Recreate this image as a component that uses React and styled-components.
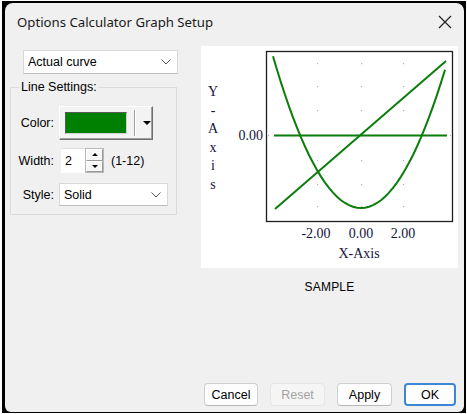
import styled, { createGlobalStyle } from "styled-components";

const GlobalStyle = createGlobalStyle`
  html, body {
    margin: 0;
    padding: 0;
    background: #ffffff;
  }
  body {
    font-family: "Liberation Sans", Arial, sans-serif;
  }
`;

const Page = styled.div`
  width: 467px;
  height: 414px;
  padding: 1px 1px 1px 2px;
  box-sizing: border-box;
`;

const Frame = styled.div`
  background: #000;
  padding: 2px 2px 1px 3px;
  height: 100%;
  box-sizing: border-box;
`;

const Dialog = styled.div`
  background: #f0f0f0;
  border-radius: 8px 8px 6px 6px;
  height: 100%;
  display: flex;
  flex-direction: column;
`;

const TitleBar = styled.div`
  height: 38px;
  display: flex;
  align-items: center;
  justify-content: space-between;
  padding: 0 10px 0 12px;
  font-family: "Noto Sans", "Open Sans", sans-serif;
  font-size: 13.2px;
  color: #1a1a1a;
`;

const CloseIcon = styled.svg`
  width: 14px;
  height: 14px;
  margin-right: 2px;
`;

const Body = styled.div`
  flex: 1;
  display: flex;
  padding: 7px 5px 0 5px;
  gap: 24px;
`;

const LeftCol = styled.div`
  width: 167px;
  display: flex;
  flex-direction: column;
`;

const Select = styled.div`
  box-sizing: border-box;
  width: ${(p) => p.$w}px;
  height: ${(p) => p.$h}px;
  margin-left: ${(p) => p.$ml || 0}px;
  margin-top: ${(p) => p.$mt || 0}px;
  background: #fff;
  border: 1px solid #d9d9d9;
  border-bottom-color: #bcbcbc;
  display: flex;
  align-items: center;
  justify-content: space-between;
  padding: 0 6px 0 4px;
  font-size: 12.5px;
  color: #000;
`;

const Chevron = () => (
  <svg width="10" height="6" viewBox="0 0 10 6">
    <path d="M0.5 0.5 L5 5 L9.5 0.5" fill="none" stroke="#555" strokeWidth="1" />
  </svg>
);

const Group = styled.fieldset`
  margin: 6px 0 0 0;
  padding: 8px 0 8px 0;
  border: 1px solid #dcdcdc;
  height: 135px;
  box-sizing: border-box;
  display: flex;
  flex-direction: column;
`;

const Legend = styled.legend`
  font-size: 12.5px;
  padding: 0 2px;
  margin-left: 8px;
  color: #000;
`;

const Row = styled.div`
  display: flex;
  align-items: center;
  height: ${(p) => p.$h}px;
  margin-top: ${(p) => p.$mt || 0}px;
`;

const Label = styled.span`
  width: 43px;
  text-align: right;
  font-size: 12.5px;
  color: #000;
  margin-right: ${(p) => p.$mr || 5}px;
`;

const ColorButton = styled.div`
  box-sizing: border-box;
  width: 94px;
  height: 34px;
  background: #f3f3f3;
  border: 1px solid #fff;
  border-right-color: #6d6d6d;
  border-bottom-color: #6d6d6d;
  box-shadow: inset -1px -1px 0 #a0a0a0;
  display: flex;
  align-items: center;
  padding-left: 5px;
`;

const Swatch = styled.div`
  width: 62px;
  height: 22px;
  background: #008000;
  box-sizing: border-box;
  border: 1px solid #5a5a5a;
  border-right-color: #d0d0d0;
  border-bottom-color: #d0d0d0;
`;

const Separator = styled.div`
  width: 1px;
  height: 26px;
  background: #a0a0a0;
  box-shadow: 1px 0 0 #fff;
  margin: 0 8px 0 7px;
`;

const DownArrow = styled.div`
  width: 0;
  height: 0;
  border-left: 4px solid transparent;
  border-right: 4px solid transparent;
  border-top: 4px solid #000;
`;

const SpinInput = styled.div`
  box-sizing: border-box;
  width: 24px;
  height: 25px;
  background: #fff;
  border-top: 1px solid #e0e0e0;
  display: flex;
  align-items: center;
  padding-left: 4px;
  font-size: 12.5px;
`;

const SpinButtons = styled.div`
  width: 19px;
  height: 25px;
  display: flex;
  flex-direction: column;
  box-sizing: border-box;
  border: 1px solid #b9b9b9;
  background: #f7f7f7;
`;

const SpinHalf = styled.div`
  flex: 1;
  display: flex;
  align-items: center;
  justify-content: center;
  border: 1px solid #fff;
  border-right-color: #9a9a9a;
  border-bottom-color: #9a9a9a;
`;

const Tri = styled.div`
  width: 0;
  height: 0;
  border-left: 3px solid transparent;
  border-right: 3px solid transparent;
  ${(p) => (p.$up ? "border-bottom: 3px solid #000;" : "border-top: 3px solid #000;")}
`;

const Hint = styled.span`
  font-size: 12.5px;
  margin-left: 7px;
`;

const RightCol = styled.div`
  width: 257px;
  display: flex;
  flex-direction: column;
  align-items: center;
  margin-top: -2px;
`;

const GraphPanel = styled.div`
  width: 257px;
  height: 222px;
  background: #fff;
`;

const Caption = styled.div`
  margin-top: 12px;
  font-size: 12px;
  color: #000;
  letter-spacing: 0.2px;
`;

const Footer = styled.div`
  display: flex;
  justify-content: flex-end;
  gap: 12px;
  padding: 0 8px 6px 0;
`;

const Button = styled.div`
  box-sizing: border-box;
  width: ${(p) => p.$w}px;
  height: 23px;
  border-radius: 4px;
  display: flex;
  align-items: center;
  justify-content: center;
  font-family: "Liberation Sans", Arial, sans-serif;
  font-size: 12.5px;
  background: ${(p) => (p.$disabled ? "#f5f5f5" : "#fdfdfd")};
  color: ${(p) => (p.$disabled ? "#a3a3a3" : "#000")};
  border: 1px solid ${(p) => (p.$disabled ? "#e6e6e6" : "#d0d0d0")};
  border-bottom-color: ${(p) => (p.$disabled ? "#e6e6e6" : "#b8b8b8")};
  ${(p) => p.$primary && "border: 2px solid #3d86d6;"}
`;

const GREEN = "#0a7d0a";
const INK = "#14143c";

const parabola = () => {
  const pts = [];
  for (let x = 72; x <= 244; x += 4) {
    const d = x - 160;
    pts.push(`${x},${(162 - 0.0196 * d * d).toFixed(1)}`);
  }
  return pts.join(" ");
};

const gridX = [116, 160, 202];
const gridY = [17, 40, 64, 89, 114, 138, 160];

const Graph = () => (
  <svg width="257" height="222" viewBox="0 0 257 222">
    <rect x="65.5" y="5.5" width="186" height="170" fill="none" stroke="#1e1e1e" strokeWidth="1.3" />
    {gridX.map((x) =>
      gridY.map((y) => <rect key={`${x}-${y}`} x={x} y={y} width="1.2" height="1.2" fill="#b5b5b5" />)
    )}
    <rect x="67" y="89" width="1.2" height="1.2" fill="#b5b5b5" />
    <rect x="249" y="89" width="1.2" height="1.2" fill="#b5b5b5" />
    <line x1="73" y1="89.5" x2="246" y2="89.5" stroke={GREEN} strokeWidth="2" />
    <line x1="74" y1="163" x2="245" y2="15" stroke={GREEN} strokeWidth="2" />
    <polyline points={parabola()} fill="none" stroke={GREEN} strokeWidth="2" />
    <g fontFamily="'Liberation Serif', 'Times New Roman', serif" fontSize="14" fill={INK}>
      {["Y", "-", "A", "x", "i", "s"].map((c, i) => (
        <text key={i} x="12" y={50 + i * 18.5} textAnchor="middle">
          {c}
        </text>
      ))}
      <text x="62" y="94" textAnchor="end">0.00</text>
      <text x="115" y="192" textAnchor="middle">-2.00</text>
      <text x="160" y="192" textAnchor="middle">0.00</text>
      <text x="202" y="192" textAnchor="middle">2.00</text>
      <text x="158" y="212" textAnchor="middle">X-Axis</text>
    </g>
  </svg>
);

export default function App() {
  return (
    <Page>
      <GlobalStyle />
      <Frame>
        <Dialog>
          <TitleBar>
            <span>Options Calculator Graph Setup</span>
            <CloseIcon viewBox="0 0 14 14">
              <path d="M1 1 L13 13 M13 1 L1 13" stroke="#222" strokeWidth="1.2" />
            </CloseIcon>
          </TitleBar>
          <Body>
            <LeftCol>
              <Select $w={155} $h={24} $ml={13} $mt={2}>
                <span>Actual curve</span>
                <Chevron />
              </Select>
              <Group>
                <Legend>Line Settings:</Legend>
                <Row $h={34} $mt={4}>
                  <Label>Color:</Label>
                  <ColorButton>
                    <Swatch />
                    <Separator />
                    <DownArrow />
                  </ColorButton>
                </Row>
                <Row $h={25} $mt={8}>
                  <Label $mr={7}>Width:</Label>
                  <SpinInput>2</SpinInput>
                  <SpinButtons>
                    <SpinHalf>
                      <Tri $up />
                    </SpinHalf>
                    <SpinHalf>
                      <Tri />
                    </SpinHalf>
                  </SpinButtons>
                  <Hint>(1-12)</Hint>
                </Row>
                <Row $h={23} $mt={10}>
                  <Label>Style:</Label>
                  <Select $w={109} $h={23}>
                    <span>Solid</span>
                    <Chevron />
                  </Select>
                </Row>
              </Group>
            </LeftCol>
            <RightCol>
              <GraphPanel>
                <Graph />
              </GraphPanel>
              <Caption>SAMPLE</Caption>
            </RightCol>
          </Body>
          <Footer>
            <Button $w={54}>Cancel</Button>
            <Button $w={55} $disabled>Reset</Button>
            <Button $w={55}>Apply</Button>
            <Button $w={52} $primary>OK</Button>
          </Footer>
        </Dialog>
      </Frame>
    </Page>
  );
}
